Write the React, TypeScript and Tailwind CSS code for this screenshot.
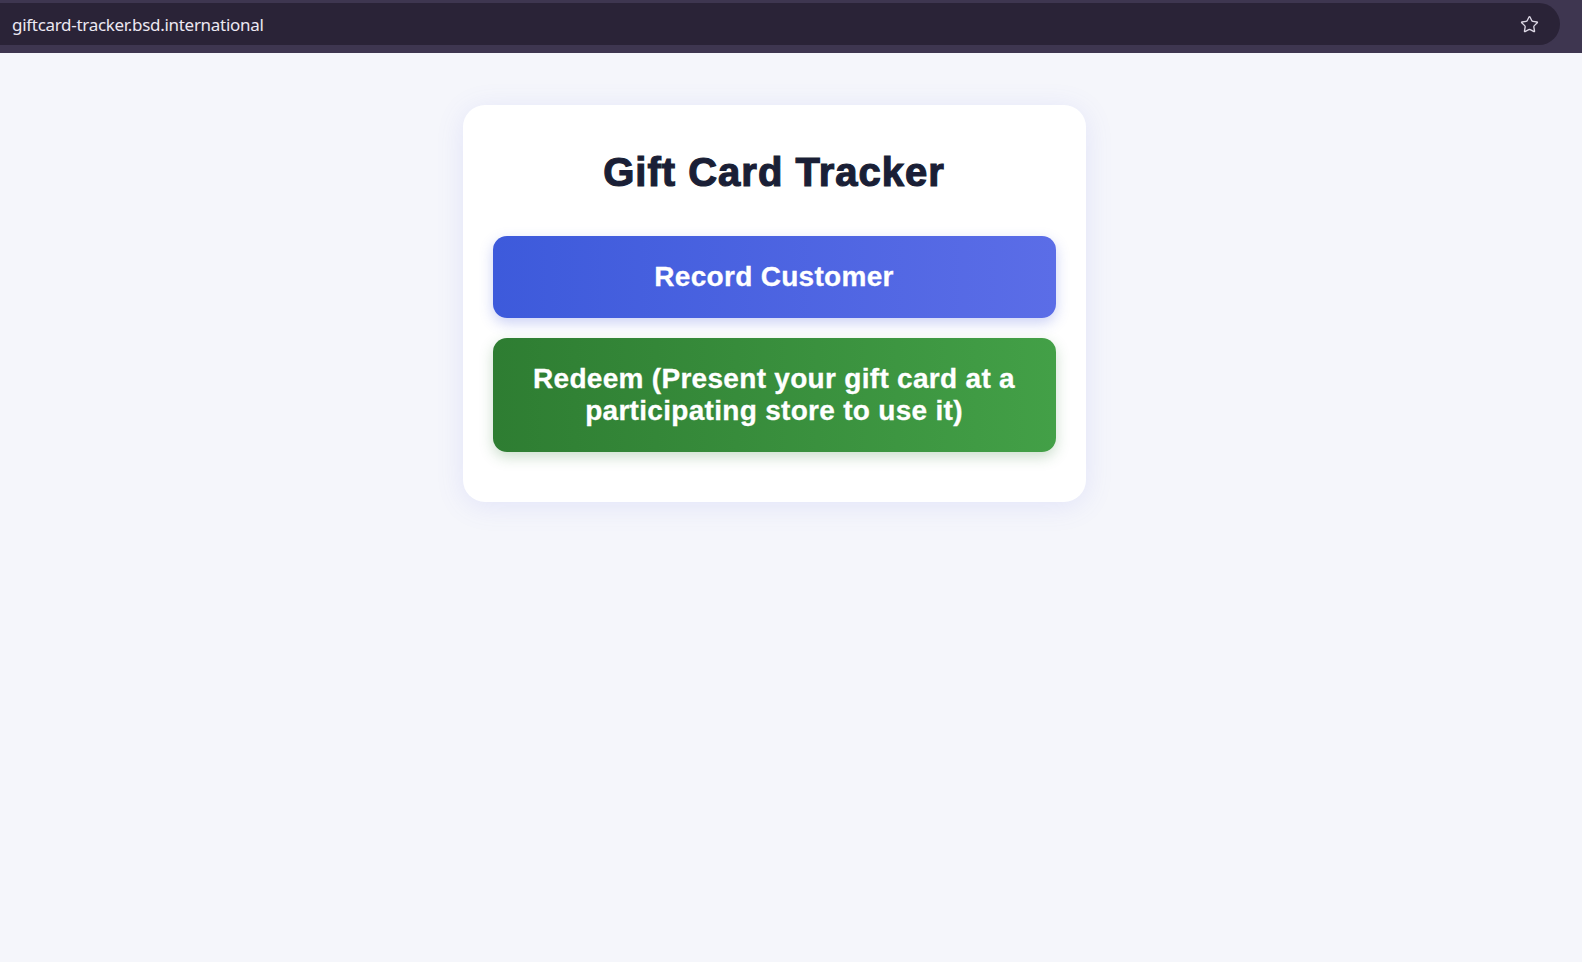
import React from "react";
import { Star } from "lucide-react";

export default function App() {
  return (
    <div className="min-h-[962px] w-full bg-[#f5f6fb] font-['Liberation_Sans',Arial,sans-serif]">
      {/* browser chrome */}
      <div className="h-[53px] w-full bg-[#3e3650] pt-[3px] pb-[8px]">
        <div className="flex h-[42px] w-[1560px] items-center justify-between rounded-r-[21px] bg-[#2a2337] pl-[12px] pr-[21px]">
          <span className="font-['Noto_Sans',sans-serif] text-[17px] leading-none tracking-[-0.3px] text-[#ece8f2]">
            giftcard-tracker.bsd.international
          </span>
          <Star size={19} strokeWidth={1.7} className="text-[#dcd7e4]" />
        </div>
      </div>

      {/* page */}
      <div className="flex justify-center pr-[34px] pt-[52px]">
        <div className="w-[623px] rounded-[22px] bg-white px-[30px] pt-[44px] pb-[50px] shadow-[0_4px_28px_rgba(99,110,230,0.13)]">
          <h1 className="text-center text-[40px] font-bold leading-[1.15] tracking-[1px] text-[#1a1f36] [-webkit-text-stroke:1.2px_#1a1f36]">
            Gift Card Tracker
          </h1>
          <div className="mt-[41px] flex flex-col gap-[20px]">
            <button className="w-full rounded-[14px] bg-gradient-to-r from-[#3d5adb] to-[#5b6de7] px-[30px] py-[25px] text-center text-[28px] font-bold leading-[32px] tracking-[0.3px] text-white shadow-[0_5px_14px_rgba(70,90,220,0.28)] [-webkit-text-stroke:0.3px_#ffffff]">
              Record Customer
            </button>
            <button className="w-full rounded-[14px] bg-gradient-to-r from-[#2e7d32] to-[#43a047] px-[30px] py-[25px] text-center text-[28px] font-bold leading-[32px] tracking-[0.3px] text-white shadow-[0_5px_14px_rgba(46,125,50,0.25)] [-webkit-text-stroke:0.3px_#ffffff]">
              Redeem (Present your gift card at a participating store to use it)
            </button>
          </div>
        </div>
      </div>
    </div>
  );
}
